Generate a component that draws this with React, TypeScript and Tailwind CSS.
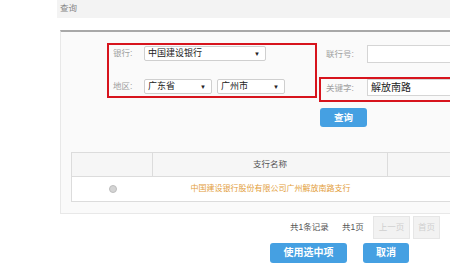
const font = "font-['Liberation_Sans','Noto_Sans_CJK_SC',sans-serif]";

// ─── Small pieces ─────────────────────────────────────────────────────────────

function FakeSelect({ value, className }: { value: string; className: string }) {
  return (
    <div
      className={`flex h-[15px] items-center justify-between rounded-[2px] border border-[#cfcfcf] bg-white pl-[3px] pr-[5px] text-[9px] leading-none text-[#222] ${className}`}
    >
      <span>{value}</span>
      <span className="text-[6px] text-[#222]">▼</span>
    </div>
  );
}

function Label({ children, className = "" }: { children: string; className?: string }) {
  return (
    <span className={`text-[8.5px] leading-none text-[#a0a0a0] ${className}`}>{children}</span>
  );
}

// ─── Page ─────────────────────────────────────────────────────────────────────

export default function App() {
  return (
    <div className={`h-[280px] w-[450px] overflow-hidden bg-white ${font}`}>
      {/* Title bar */}
      <div className="ml-[57px] h-[18px] bg-[#f3f3f3] pl-[3px] text-[8.5px] leading-[16px] text-[#888]">
        查询
      </div>

      {/* Search panel */}
      <div className="ml-[60px] mt-[12px] w-[430px] border-x border-b border-t-2 border-[#e8e8e8] border-t-[#a8a8a8] bg-[#fafafa] pb-[11px] pt-[11px]">
        <div className="flex items-start">
          {/* Bank / region box */}
          <div className="ml-[46px] flex h-[55px] w-[211px] flex-col border-2 border-[#d7141d] pl-[4px]">
            <div className="mt-[1px] flex h-[15px] items-center">
              <Label className="w-[31px]">银行:</Label>
              <FakeSelect value="中国建设银行" className="w-[122px]" />
            </div>
            <div className="mt-[18px] flex h-[15px] items-center">
              <Label className="w-[31px]">地区:</Label>
              <FakeSelect value="广东省" className="w-[68px]" />
              <FakeSelect value="广州市" className="ml-[5px] w-[68px]" />
            </div>
          </div>

          {/* Right column */}
          <div className="ml-[2px] flex flex-col">
            <div className="mt-[2px] flex h-[18px] items-center">
              <Label className="w-[48px] pl-[7px]">联行号:</Label>
              <div className="h-[18px] w-[110px] border border-[#d5d5d5] bg-white" />
            </div>
            <div className="mt-[14px] flex h-[25px] w-[170px] items-start border-2 border-[#d7141d]">
              <Label className="mt-[5px] w-[46px] pl-[5px]">关键字:</Label>
              <div className="flex h-[17px] w-[110px] items-center border border-[#d5d5d5] bg-white pl-[3px] text-[10px] leading-none text-[#222]">
                解放南路
              </div>
            </div>
            <button className="ml-[1px] mt-[6px] h-[19px] w-[47px] rounded-[3px] bg-[#45a0e2] text-[9.5px] font-bold leading-none text-white">
              查询
            </button>
          </div>
        </div>

        {/* Result table */}
        <div className="ml-[10px] mt-[25px] w-[410px] border border-[#dcdcdc]">
          <div className="flex h-[24px] border-b border-[#dcdcdc] bg-[#f6f6f6]">
            <div className="w-[81px] border-r border-[#dcdcdc]" />
            <div className="flex w-[235px] items-center justify-center border-r border-[#dcdcdc] text-[8.5px] text-[#555]">
              支行名称
            </div>
            <div className="flex-1" />
          </div>
          <div className="flex h-[24px] bg-white">
            <div className="flex w-[81px] items-center justify-center">
              <span className="h-[8px] w-[8px] rounded-full border border-[#bdbdbd] bg-[#d4d4d4]" />
            </div>
            <div className="flex w-[235px] items-center justify-center text-[8px] leading-none text-[#e3a03c]">
              中国建设银行股份有限公司广州解放南路支行
            </div>
          </div>
        </div>
      </div>

      {/* Pagination */}
      <div className="mt-[2px] flex h-[23px] items-center text-[8.5px] leading-none text-[#555]">
        <span className="ml-[290px] w-[52px]">共1条记录</span>
        <span className="w-[31px]">共1页</span>
        <div className="flex h-[23px] w-[37px] items-center justify-center border border-[#e6e6e6] bg-[#f2f2f2] text-[#cfcfcf]">
          上一页
        </div>
        <div className="ml-[3px] flex h-[23px] w-[27px] items-center justify-center border border-[#e6e6e6] bg-[#f2f2f2] text-[#cfcfcf]">
          首页
        </div>
      </div>

      {/* Actions */}
      <div className="mt-[4px] flex">
        <button className="ml-[270px] h-[20px] w-[77px] rounded-[3px] bg-[#45a0e2] text-[10px] font-bold leading-none text-white">
          使用选中项
        </button>
        <button className="ml-[16px] h-[20px] w-[46px] rounded-[3px] bg-[#45a0e2] text-[10px] font-bold leading-none text-white">
          取消
        </button>
      </div>
    </div>
  );
}
